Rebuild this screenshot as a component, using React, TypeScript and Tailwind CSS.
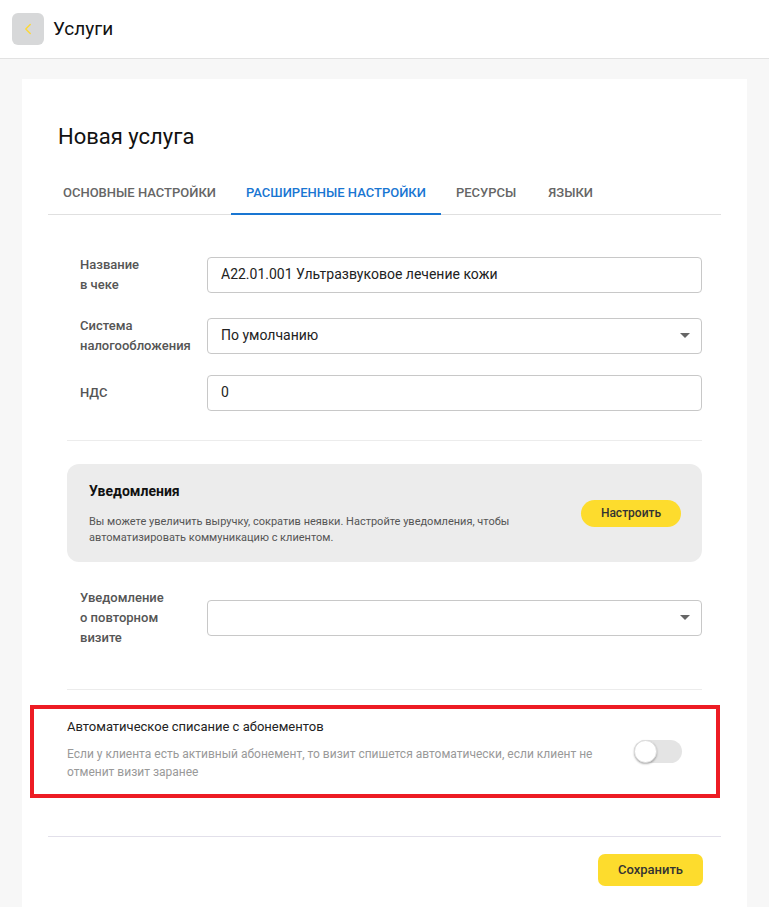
import { ChevronLeft } from "lucide-react";

function Row({ label, children, className = "" }: { label: React.ReactNode; children: React.ReactNode; className?: string }) {
    return (
        <div className={`flex items-center ${className}`}>
            <div className="w-[127px] shrink-0 text-[13px] font-medium leading-[20px] text-[#555]">{label}</div>
            {children}
        </div>
    );
}

function Field({ value, select }: { value?: string; select?: boolean }) {
    return (
        <div className="flex h-[36px] flex-1 items-center justify-between rounded-[4px] border border-[#c8c8c8] bg-white pl-[13px] pr-[11px] text-[14px] text-[#222]">
            <span>{value}</span>
            {select && <span className="h-0 w-0 border-x-[5px] border-t-[5px] border-x-transparent border-t-[#666]"></span>}
        </div>
    );
}

export default function App() {
    return (
        <div className="min-h-[907px] bg-[#f7f7f7] font-['Roboto',sans-serif]">
            <div className="flex h-[59px] items-center gap-[9px] border-b border-[#e2e2e2] bg-white px-[12px]">
                <div className="flex h-[32px] w-[32px] items-center justify-center rounded-[6px] bg-[#d7d8d9]">
                    <ChevronLeft className="h-[18px] w-[18px] text-[#fdd835]" strokeWidth={1.8} />
                </div>
                <span className="text-[19px] text-[#111]">Услуги</span>
            </div>

            <div className="ml-[22px] mt-[20px] w-[725px] bg-white pb-[21px] pt-[46px]">
                <h1 className="pl-[36px] text-[22px] leading-[24px] text-[#111]">Новая услуга</h1>

                <div className="mx-[26px] mt-[34px] flex border-b border-[#e0e0e0] text-[13px] font-medium uppercase">
                    <div className="px-[15px] pb-[11px] text-[#666]">Основные настройки</div>
                    <div className="-mb-px border-b-2 border-[#1976d2] px-[15px] pb-[10px] text-[#1976d2]">Расширенные настройки</div>
                    <div className="px-[15px] pb-[11px] text-[#666]">Ресурсы</div>
                    <div className="px-[17px] pb-[11px] text-[#666]">Языки</div>
                </div>

                <div className="mx-[45px] mt-[40px]">
                    <div className="flex flex-col pl-[13px]">
                        <Row label={<>Название<br />в чеке</>}>
                            <Field value="A22.01.001 Ультразвуковое лечение кожи" />
                        </Row>
                        <Row className="mt-[21px]" label={<>Система<br />налогообложения</>}>
                            <Field value="По умолчанию" select />
                        </Row>
                        <Row className="mt-[19px]" label="НДС">
                            <Field value="0" />
                        </Row>
                    </div>

                    <div className="mt-[29px] border-t border-[#ececec]"></div>

                    <div className="mt-[23px] flex items-center justify-between rounded-[12px] bg-[#ececec] pb-[16px] pl-[22px] pr-[21px] pt-[17px]">
                        <div>
                            <div className="text-[14px] font-bold text-[#111]">Уведомления</div>
                            <div className="mt-[12px] text-[11px] leading-[16px] text-[#555]">
                                Вы можете увеличить выручку, сократив неявки. Настройте уведомления, чтобы
                                <br />
                                автоматизировать коммуникацию с клиентом.
                            </div>
                        </div>
                        <button className="h-[27px] w-[100px] rounded-full bg-[#fddc2d] text-[12px] font-medium text-[#333]">Настроить</button>
                    </div>

                    <div className="mt-[26px] pl-[13px]">
                        <Row label={<>Уведомление<br />о повторном<br />визите</>}>
                            <Field select />
                        </Row>
                    </div>

                    <div className="mt-[41px] border-t border-[#ececec]"></div>
                </div>

                <div className="ml-[8px] mr-[27px] mt-[15px] flex items-center justify-between border-4 border-[#ed1c24] pb-[13px] pl-[33px] pr-[34px] pt-[8px]">
                    <div>
                        <div className="text-[13px] text-[#222]">Автоматическое списание с абонементов</div>
                        <div className="mt-[9px] text-[12px] leading-[18px] text-[#999]">
                            Если у клиента есть активный абонемент, то визит спишется автоматически, если клиент не
                            <br />
                            отменит визит заранее
                        </div>
                    </div>
                    <div className="relative mt-[6px] h-[23px] w-[48px] rounded-full bg-[#e4e4e4]">
                        <div className="absolute left-0 top-0 h-[23px] w-[23px] rounded-full border border-[#ddd] bg-white shadow-[0_1px_2px_rgba(0,0,0,0.3)]"></div>
                    </div>
                </div>

                <div className="mx-[26px] mt-[38px] flex justify-end border-t border-[#e2e0ea] pr-[18px] pt-[17px]">
                    <button className="h-[32px] w-[105px] rounded-[7px] bg-[#fddc2d] text-[13px] font-medium text-[#333]">Сохранить</button>
                </div>
            </div>
        </div>
    );
}
